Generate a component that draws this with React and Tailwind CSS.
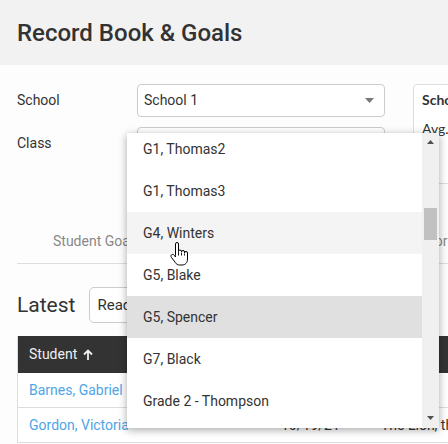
import React from "react";

const items = [
  { label: "G1, Thomas2", state: "" },
  { label: "G1, Thomas3", state: "" },
  { label: "G4, Winters", state: "hover" },
  { label: "G5, Blake", state: "" },
  { label: "G5, Spencer", state: "selected" },
  { label: "G7, Black", state: "" },
  { label: "Grade 2 - Thompson", state: "" },
];

function Caret({ className }) {
  return (
    <svg width="9" height="5" viewBox="0 0 9 5" className={className}>
      <path d="M0 0 H9 L4.5 5 Z" fill="#777" />
    </svg>
  );
}

function Hand() {
  return (
    <svg
      width="18"
      height="24"
      viewBox="0 0 18 24"
      className="absolute left-[170px] top-[242px]"
    >
      <path
        d="M5.5 13.5 V2 a1.5 1.5 0 0 1 3 0 V9.5 a1.5 1.5 0 0 1 3 0 V10 a1.5 1.5 0 0 1 3 0 V11 a1.5 1.5 0 0 1 3 0 V17 c0 3.5 -2 6 -5.5 6 H9.5 c-1.8 0 -3 -0.8 -4 -2.2 L1.3 15.2 c-0.7 -1 -0.4 -2.2 0.6 -2.6 c0.9 -0.4 1.9 0 2.5 0.8 L5.5 15 Z"
        fill="#fff"
        stroke="#000"
        strokeWidth="1"
        strokeLinejoin="round"
      />
      <path d="M8.5 10 V13.5 M11.5 10.5 V13.5 M14.5 11.5 V13.5" stroke="#000" strokeWidth="0.9" />
    </svg>
  );
}

export default function App() {
  return (
    <div
      className="relative w-[448px] h-[444px] overflow-hidden bg-[#fdfdfd] text-[#333]"
      style={{ fontFamily: "Roboto, 'Liberation Sans', sans-serif" }}
    >
      <div className="h-[65px] bg-[#f2f2f2] pl-[17px] flex items-center">
        <h1 className="text-[24px] font-medium leading-none text-[#333] whitespace-nowrap">
          Record Book &amp; Goals
        </h1>
      </div>

      <div className="w-[1000px] pl-[17px] pt-[19px]">
        <div className="flex items-start">
          <div className="w-[368px] shrink-0">
            <div className="flex items-center h-[33px]">
              <div className="w-[120px] text-[14px]">School</div>
              <div className="w-[248px] h-[33px] border border-[#ccc] rounded-[4px] flex items-center justify-between pl-[6px] pr-[10px] bg-white text-[14px]">
                <span>School 1</span>
                <Caret />
              </div>
            </div>
            <div className="flex items-center h-[33px] mt-[10px]">
              <div className="w-[120px] text-[14px]">Class</div>
              <div className="w-[248px] h-[33px] border border-[#ccc] rounded-[4px] bg-white" />
            </div>
          </div>
          <div
            className="ml-[28px] w-[300px] h-[100px] shrink-0 border border-[#ddd] rounded-[4px] bg-white pt-[5px] px-[8px] text-[14px]"
            style={{ fontFamily: "Lato, 'Open Sans', sans-serif" }}
          >
            <div className="font-bold leading-[20px] whitespace-nowrap">School Summary</div>
            <div className="mt-[9px] leading-[20px] whitespace-nowrap">Avg. Score</div>
          </div>
        </div>

        <div className="mt-[47px] pb-[12px] border-b border-[#ddd] flex text-[14px] leading-[20px] text-[#888]">
          <span className="ml-[36px] w-[360px] shrink-0">Student Goals</span>
          <span className="ml-[2px]">Tutor</span>
        </div>

        <div className="mt-[23px] flex items-center">
          <span className="text-[21px] leading-none text-[#333]">Latest</span>
          <div className="ml-[14px] w-[250px] h-[36px] border border-[#ccc] rounded-[5px] bg-white flex items-center pl-[7px] text-[15px]">
            Reading
          </div>
        </div>

        <div className="mt-[13px] border-l border-[#ddd] text-[14px]">
          <div className="h-[37px] bg-[#333] text-[#f0f0f0] flex items-center pl-[11px]">
            <span>Student</span>
            <svg width="10" height="12" viewBox="0 0 10 12" className="ml-[6px]">
              <path d="M5 11 V2 M1 5.5 L5 1.5 L9 5.5" stroke="#f0f0f0" strokeWidth="1.8" fill="none" />
            </svg>
          </div>
          <div className="h-[35px] border-b border-[#ddd] flex items-center pl-[11px] text-[#4ea5e6] bg-white">
            <span className="w-[252px]">Barnes, Gabriel</span>
            <span className="w-[100px] text-[#333]">10/12/21</span>
            <span className="text-[#333]">Holes</span>
          </div>
          <div className="h-[35px] border-b border-[#ddd] flex items-center pl-[11px] text-[#4ea5e6] bg-white">
            <span className="w-[252px]">Gordon, Victoria</span>
            <span className="w-[100px] text-[#333]">10/19/21</span>
            <span className="text-[#333]">The Lion, the Witch</span>
          </div>
        </div>
      </div>

      <div className="absolute left-[127px] top-[133px] w-[312px] h-[295px] bg-white shadow-[0_2px_8px_rgba(0,0,0,0.35)] flex overflow-hidden">
        <div className="w-[295px] h-full overflow-hidden">
          <div className="mt-[-5px]">
            {items.map((it) => (
              <div
                key={it.label}
                className={
                  "h-[42px] flex items-center pl-[16px] text-[14px] text-[#333] " +
                  (it.state === "hover"
                    ? "bg-[#f4f4f4]"
                    : it.state === "selected"
                    ? "bg-[#e0e0e0]"
                    : "bg-white")
                }
              >
                {it.label}
              </div>
            ))}
          </div>
        </div>
        <div className="w-[17px] h-full bg-[#f0f0f0] relative">
          <svg width="7" height="4" viewBox="0 0 7 4" className="absolute left-[5px] top-[7px]">
            <path d="M0 4 H7 L3.5 0 Z" fill="#505050" />
          </svg>
          <div className="absolute left-[2px] top-[75px] w-[13px] h-[32px] bg-[#c1c1c1]" />
          <svg width="7" height="4" viewBox="0 0 7 4" className="absolute left-[5px] bottom-[8px]">
            <path d="M0 0 H7 L3.5 4 Z" fill="#505050" />
          </svg>
        </div>
      </div>

      <Hand />
    </div>
  );
}
